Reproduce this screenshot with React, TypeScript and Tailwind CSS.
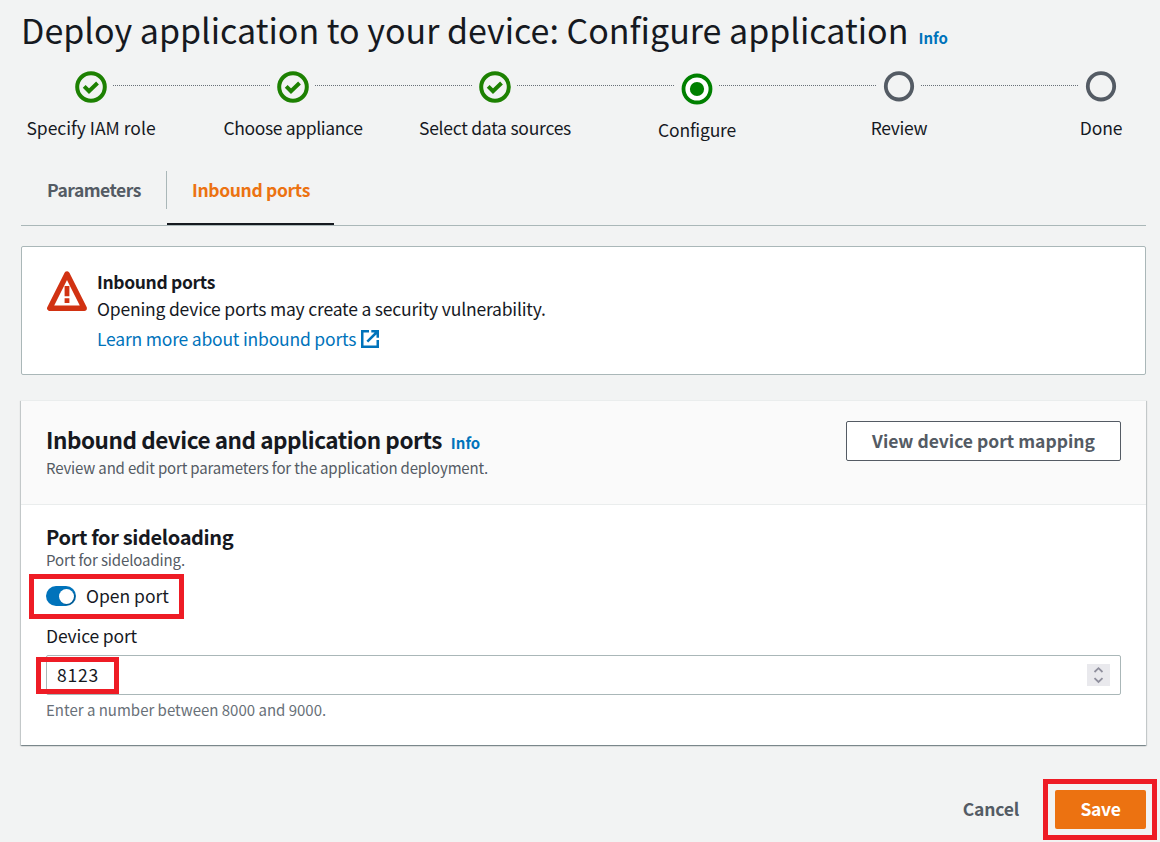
type StepState = "done" | "current" | "upcoming";

const steps: { label: string; state: StepState; tracking: string }[] = [
  { label: "Specify IAM role", state: "done", tracking: "" },
  { label: "Choose appliance", state: "done", tracking: "tracking-[-0.36px]" },
  { label: "Select data sources", state: "done", tracking: "tracking-[-0.25px]" },
  { label: "Configure", state: "current", tracking: "tracking-[-0.2px]" },
  { label: "Review", state: "upcoming", tracking: "tracking-[-0.3px]" },
  { label: "Done", state: "upcoming", tracking: "tracking-[-0.1px]" },
];

function StepIcon({ state }: { state: StepState }) {
  if (state === "done") {
    return (
      <svg width="32" height="32" viewBox="0 0 32 32" fill="none" stroke="#1d8102" className="mt-0.5">
        <circle cx="16" cy="16" r="13.8" strokeWidth="4" />
        <path d="M9.2 15.4 14 20.2 22.5 12" strokeWidth="4" />
      </svg>
    );
  }
  if (state === "current") {
    return (
      <svg width="32" height="32" viewBox="0 0 32 32" className="mt-1">
        <circle cx="16" cy="16" r="13.5" fill="#fff" stroke="#008000" strokeWidth="3.8" />
        <circle cx="16" cy="16" r="7.1" fill="#008000" />
      </svg>
    );
  }
  return (
    <svg width="32" height="32" viewBox="0 0 32 32" className="mt-px">
      <circle cx="16" cy="16.3" r="13.2" fill="none" stroke="#545b64" strokeWidth="3.8" />
    </svg>
  );
}

function Stepper() {
  return (
    <div className="mt-[17px]">
      <div className="flex h-9 pr-[36.5px] pl-[68px]">
        {steps.map((s, i) => (
          <div key={s.label} className={i === 0 ? "flex flex-none" : "flex flex-1"}>
            {i > 0 && <div className="mt-4 h-0 flex-1 border-t border-dotted border-[#687078]" />}
            <div className="flex w-[45px] flex-none justify-center">
              <StepIcon state={s.state} />
            </div>
          </div>
        ))}
      </div>
      <div className="mt-[9px] -ml-[10px] grid w-[1212px] grid-cols-6 text-center leading-7">
        {steps.map((s) => (
          <div key={s.label} className={s.state === "current" ? "h-7 pt-0.5" : "h-7"}>
            <span className={s.tracking}>{s.label}</span>
          </div>
        ))}
      </div>
    </div>
  );
}

function Tabs() {
  return (
    <div className="mt-[29px] mr-[14px] ml-[21px] flex h-[55px] border-b border-[#aab7b8] leading-7 font-bold">
      <div className="h-[38px] w-[146px] border-r border-[#aab7b8] pt-[5px] pl-[26px] text-[#545b64]">
        <span className="tracking-[-0.5px]">Parameters</span>
      </div>
      <div className="w-[167px] border-b-2 border-[#16191f] pt-[5px] pl-[25px] text-[#ec7211]">
        <span className="tracking-[-0.35px]">Inbound ports</span>
      </div>
    </div>
  );
}

function InboundAlert() {
  return (
    <div className="mt-5 mr-[14px] ml-[21px] flex h-[129px] rounded-[2px] border border-[#aab7b8] bg-white pt-[19px] pl-[25px]">
      <svg width="40" height="40" viewBox="0 0 40 40" className="mt-[5px] flex-none">
        <path d="M20 3 2.8 37.3h34.4z" fill="none" stroke="#d13212" strokeWidth="5.4" strokeLinejoin="round" />
        <path d="M17.6 15h4.8v10.2h-4.8zM17.6 27.2h4.8V32h-4.8z" fill="#d13212" />
      </svg>
      <div className="pt-0.5 pl-[10px] leading-7">
        <div className="font-bold tracking-[-0.35px]">Inbound ports</div>
        <div className="-mt-px tracking-[-0.19px]">Opening device ports may create a security vulnerability.</div>
        <div className="mt-0.5 flex items-center text-[#0073bb]">
          <span className="tracking-[-0.2px]">Learn more about inbound ports</span>
          <svg width="18" height="18" viewBox="0 0 18 18" fill="none" stroke="#0073bb" strokeWidth="2.5" className="ml-[5px]">
            <path d="M8 1.25H1.25v15.5h15.5V10" />
            <path d="M10.3 1.25h6.45V7.7M16.5 1.5 6.3 11.7" />
          </svg>
        </div>
      </div>
    </div>
  );
}

function PortsCard() {
  return (
    <div className="mt-[25px] mr-[14px] ml-[21px] h-[345px] border-t border-[#eaeded] bg-white shadow-[0_1px_1px_0_rgba(0,28,36,0.3),1px_1px_1px_0_rgba(0,28,36,0.15),-1px_1px_1px_0_rgba(0,28,36,0.15)]">
      <div className="flex h-[104px] justify-between border-b border-[#eaeded] bg-[#fafafa] pt-5 pr-[25px] pl-[25px]">
        <div className="pt-0.5">
          <div className="flex items-baseline">
            <h2 className="text-[22.5px] leading-8 font-bold tracking-[-0.45px]">Inbound device and application ports</h2>
            <span className="ml-[9px] text-[15px] leading-5 font-bold text-[#0073bb]">Info</span>
          </div>
          <p className="mt-[3px] text-[15px] leading-5 tracking-[-0.16px] text-[#545b64]">
            Review and edit port parameters for the application deployment.
          </p>
        </div>
        <button className="h-10 w-[275px] rounded-[2px] border border-[#545b64] bg-white font-bold text-[#545b64]">
          View device port mapping
        </button>
      </div>
      <div className="px-[25px] pt-[18px]">
        <h3 className="text-[20px] leading-7 font-bold tracking-[-0.36px]">Port for sideloading</h3>
        <p className="-mt-px text-[15px] leading-5 tracking-[-0.12px] text-[#545b64]">Port for sideloading.</p>
        <div className="relative mt-3 flex h-7 items-center leading-7">
          <div className="flex h-5 w-[30px] items-center justify-end rounded-full bg-[#0073bb] pr-0.5">
            <div className="size-[15px] rounded-full bg-white shadow-[1px_1px_1px_0_rgba(0,0,0,0.25)]" />
          </div>
          <span className="ml-[10px]">Open port</span>
          <div className="absolute top-[-8px] left-[-17px] h-[45px] w-[155px] border-5 border-[#ee1c25]" />
        </div>
        <label className="mt-3 block leading-7 tracking-[-0.15px]">Device port</label>
        <div className="relative mt-[5px] flex h-10 items-center justify-between rounded-[2px] border border-[#aab7b8] pr-[10px] pl-[10px]">
          <input className="w-full tracking-[0.8px] outline-none" defaultValue="8123" />
          <svg width="23" height="22" viewBox="0 0 23 22" className="flex-none">
            <path d="M0 0h23v22H0z" fill="#e9e9ed" />
            <path d="M7.5 8 11.5 4.2 15.5 8M7.5 14.2l4 3.8 4-3.8" fill="none" stroke="#8f8f9d" strokeWidth="1.8" />
          </svg>
          <div className="absolute top-[1px] left-[-11px] h-[37px] w-[83px] border-5 border-[#ee1c25]" />
        </div>
        <p className="mt-[5px] text-[15px] leading-5 text-[#687078]">Enter a number between 8000 and 9000.</p>
      </div>
    </div>
  );
}

function Footer() {
  return (
    <div className="mt-[45px] mr-[14px] flex h-[39px] items-center justify-end font-bold">
      <button className="mr-[36px] tracking-[-0.2px] text-[#545b64]">Cancel</button>
      <div className="relative">
        <button className="block h-[39px] w-[91px] rounded-[2px] bg-[#ec7211] tracking-[-0.3px] text-white">Save</button>
        <div className="absolute top-[-11px] left-[-12px] h-[61px] w-[114px] border-5 border-[#ee1c25]" />
      </div>
    </div>
  );
}

export default function App() {
  return (
    <div className="h-[842px] w-[1160px] overflow-hidden bg-[#f2f3f3] pt-2 font-['Noto_Sans_CJK_SC','Noto_Sans',sans-serif] text-[17.5px] text-[#16191f]">
      <div className="flex h-11 items-baseline pl-[21px]">
        <h1 className="text-[34px] leading-[44px]">Deploy application to your device: Configure application</h1>
        <span className="ml-[10px] text-[15px] leading-5 font-bold text-[#0073bb]">Info</span>
      </div>
      <Stepper />
      <Tabs />
      <InboundAlert />
      <PortsCard />
      <Footer />
    </div>
  );
}
